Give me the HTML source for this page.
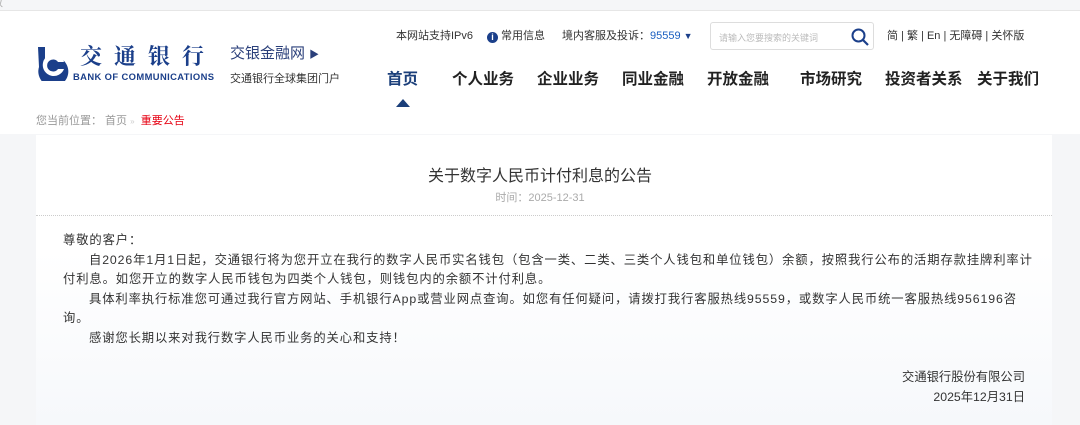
<!DOCTYPE html>
<html><head><meta charset="utf-8"><style>
*{margin:0;padding:0;box-sizing:border-box}
body{width:1080px;height:425px;overflow:hidden;background:#f5f6f8;font-family:"Liberation Sans","Noto Sans CJK SC",sans-serif;position:relative;color:#333}
.hdr{position:absolute;left:0;width:1080px;background:#fff;border-top:1px solid #e6e6e6;top:10px;height:124px}
.abs{position:absolute;white-space:nowrap}
.top{font-size:11px;color:#333;top:27px}
.nav{font-size:15.5px;font-weight:bold;color:#222;top:67px}
.panel{position:absolute;left:36px;top:135px;width:1016px;height:290px;background:linear-gradient(180deg,#fff 0%,#fff 40%,#f6f8fb 100%)}
.body{position:absolute;left:63px;font-size:12.3px;color:#333;line-height:19.6px;top:231px;white-space:nowrap;letter-spacing:0.9px}
</style></head><body>
<div class="abs" style="left:-8px;top:-6px;font-size:11px;color:#aaa">数</div>
<div class="hdr"></div>
<svg class="abs" style="left:36px;top:45px" width="34" height="36" viewBox="0 0 34 36">
<path d="M2 2 L9 2 L9 14 A15 15 0 1 1 3 22 Z" fill="#1b3f8a"/>
<path d="M17 9 A11 11 0 1 0 28 24 L22 24 A6 6 0 1 1 22 17 L28 17 A11 11 0 0 0 17 9Z" fill="#fff"/>
<circle cx="16" cy="22" r="4" fill="#1b3f8a"/>
</svg>
<div class="abs" style="left:80px;top:43px;font-size:22px;line-height:26px;color:#1b3f8a;letter-spacing:12px;font-family:'Noto Serif CJK SC',serif;font-weight:bold">交通银行</div>
<div class="abs" style="left:73px;top:71px;font-size:9.4px;color:#1b3f8a;font-weight:bold;letter-spacing:0.4px">BANK OF COMMUNICATIONS</div>
<div class="abs" style="left:230px;top:42px;font-size:15px;color:#2a3f7a">交银金融网 <span style="font-size:10px">▶</span></div>
<div class="abs" style="left:230px;top:70px;font-size:11px;color:#333">交通银行全球集团门户</div>
<div class="abs top" style="left:396px">本网站支持IPv6</div>
<div class="abs top" style="left:487px"><span style="display:inline-block;width:11px;height:11px;border-radius:50%;background:#1b3f8a;color:#fff;font-size:9px;text-align:center;line-height:11px;font-weight:bold;vertical-align:-1px">i</span> 常用信息</div>
<div class="abs top" style="left:562px">境内客服及投诉：<span style="color:#1b5fc0">95559</span> <span style="font-size:9px;color:#1b3f8a">▼</span></div>
<div class="abs" style="left:710px;top:22px;width:164px;height:28px;border:1px solid #ddd;border-radius:3px;background:#fff"><span style="position:absolute;left:8px;top:8px;font-size:9px;color:#bbb">请输入您要搜索的关键词</span>
<svg style="position:absolute;left:139px;top:4px" width="20" height="20" viewBox="0 0 20 20"><circle cx="8.5" cy="8.5" r="6" fill="none" stroke="#1b3f8a" stroke-width="2"/><path d="M13 13 L18 18" stroke="#1b3f8a" stroke-width="2.2"/></svg></div>
<div class="abs top" style="left:887px">简 | 繁 | En | 无障碍 | 关怀版</div>
<div class="abs nav" style="left:387px;color:#1b3f7a">首页</div>
<div class="abs nav" style="left:452px">个人业务</div>
<div class="abs nav" style="left:537px">企业业务</div>
<div class="abs nav" style="left:622px">同业金融</div>
<div class="abs nav" style="left:707px">开放金融</div>
<div class="abs nav" style="left:800px">市场研究</div>
<div class="abs nav" style="left:885px">投资者关系</div>
<div class="abs nav" style="left:977px">关于我们</div>
<div class="abs" style="left:396px;top:99px;width:0;height:0;border-left:7px solid transparent;border-right:7px solid transparent;border-bottom:8px solid #1b3f7a"></div>
<div class="abs" style="left:36px;top:112px;font-size:11px;color:#999">您当前位置： 首页 <span style="font-size:8px;color:#ccc">»</span> &nbsp;<span style="color:#e60012">重要公告</span></div>
<div class="panel"></div>
<div class="abs" style="left:0;width:1080px;text-align:center;top:162px;font-size:16px;color:#333">关于数字人民币计付利息的公告</div>
<div class="abs" style="left:0;width:1080px;text-align:center;top:189px;font-size:11px;color:#aaa">时间：2025-12-31</div>
<div class="abs" style="left:36px;top:215px;width:1016px;border-top:1px dotted #ccc"></div>
<div class="body">尊敬的客户：<br>
<span style="padding-left:26px">自2026年1月1日起，交通银行将为您开立在我行的数字人民币实名钱包（包含一类、二类、三类个人钱包和单位钱包）余额，按照我行公布的活期存款挂牌利率计</span><br>
付利息。如您开立的数字人民币钱包为四类个人钱包，则钱包内的余额不计付利息。<br>
<span style="padding-left:26px">具体利率执行标准您可通过我行官方网站、手机银行App或营业网点查询。如您有任何疑问，请拨打我行客服热线95559，或数字人民币统一客服热线956196咨</span><br>
询。<br>
<span style="padding-left:26px">感谢您长期以来对我行数字人民币业务的关心和支持！</span></div>
<div class="abs" style="right:55px;top:368px;font-size:12.3px;text-align:right;line-height:19.6px">交通银行股份有限公司<br>2025年12月31日</div>
</body></html>
